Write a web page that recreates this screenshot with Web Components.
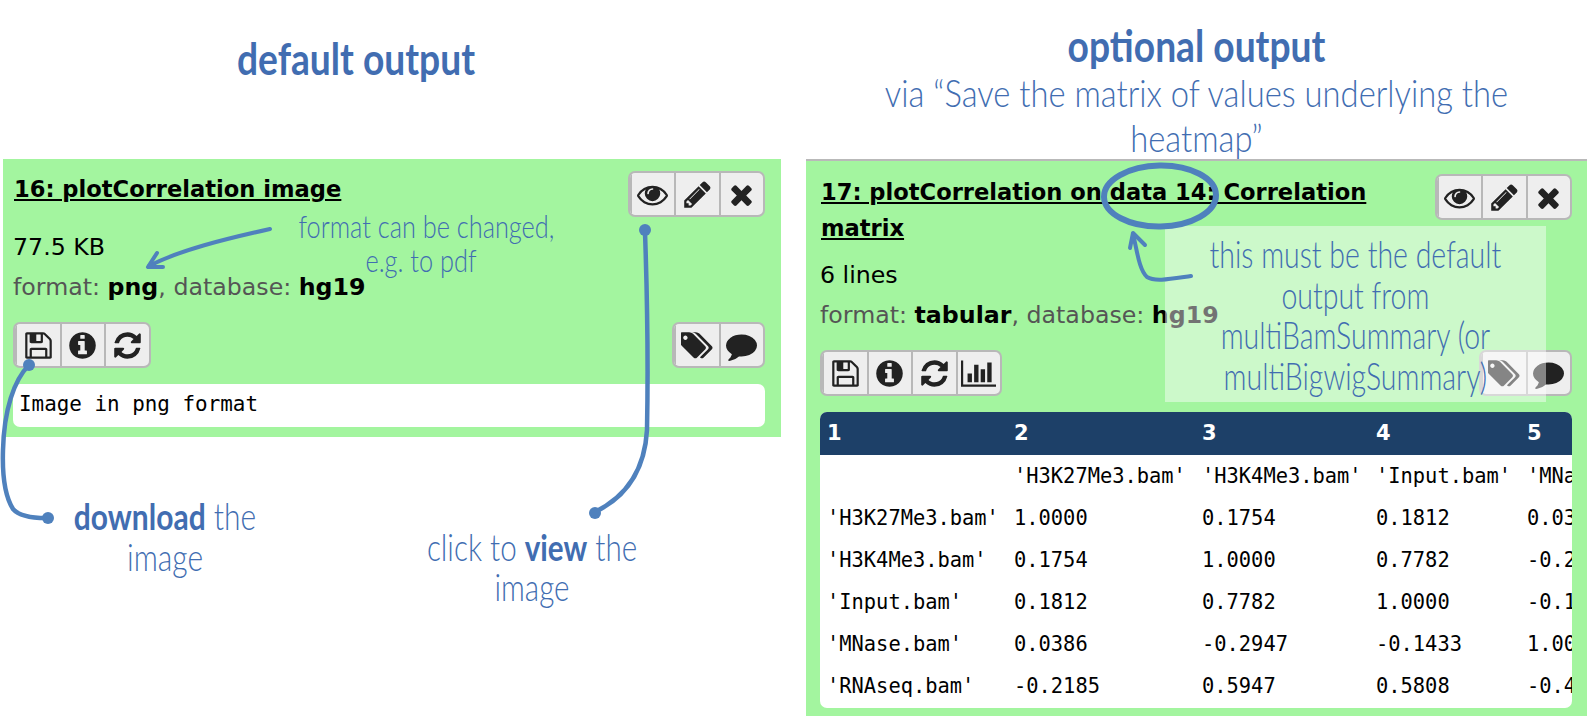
<!DOCTYPE html>
<html><head><meta charset="utf-8"><title>Galaxy plotCorrelation output</title>
<style>
html,body{margin:0;background:#fff;overflow:hidden}
x-dataset b{color:#000}
</style></head><body>
<x-page>
  <x-column slot="left" style="--head-pad:29px;--head-r:72px">
    <x-hand slot="head" bold style="--s:43px;--lh:60px;--x:.865">default output</x-hand>
    <x-dataset style="--top:0px;--pt:12px;--sm:10px;--pad-l:10px;--pad-r:16px">
      <span slot="title">16: plotCorrelation image</span>
      <x-icongroup slot="top" icons="eye pencil times"></x-icongroup>
      <span slot="size">77.5 KB</span>
      <span slot="meta">format: <b>png</b>, database: <b>hg19</b></span>
      <x-icongroup slot="left" icons="save info refresh"></x-icongroup>
      <x-icongroup slot="right" icons="tags comment"></x-icongroup>
      <x-peek>Image in png format</x-peek>
    </x-dataset>
  </x-column>
  <x-column slot="right" style="--head-pad:21px;--head-r:0px">
    <x-hand slot="head" bold style="--s:43px;--lh:49px;--x:.865">optional output</x-hand>
    <x-hand slot="head" style="--s:37px;--lh:45px;--x:.885">via “Save the matrix of values underlying the<br>heatmap”</x-hand>
    <x-dataset style="--top:2px;--pt:13px;--sm:9px;--pad-l:14px;--pad-r:15px">
      <span slot="title">17: plotCorrelation on data 14: Correlation matrix</span>
      <x-icongroup slot="top" icons="eye pencil times"></x-icongroup>
      <span slot="size">6 lines</span>
      <span slot="meta">format: <b>tabular</b>, database: <b>hg19</b></span>
      <x-icongroup slot="left" icons="save info refresh chart"></x-icongroup>
      <x-icongroup slot="right" icons="tags comment"></x-icongroup>
      <x-datatable></x-datatable>
    </x-dataset>
  </x-column>
</x-page>
<x-callout style="position:absolute;left:1165px;top:226px;width:381px;height:176px">this must be the default<br>output from<br>multiBamSummary (or<br>multiBigwigSummary)</x-callout>
<x-marks></x-marks>
<x-hand style="position:absolute;left:271px;top:209px;width:300px;--s:31px;--lh:34px;--x:.817">format can be changed,<br>e.g. to pdf</x-hand>
<x-hand style="position:absolute;left:15px;top:495px;width:300px;--s:37px;--lh:41px;--x:.81"><b>download</b> the<br>image</x-hand>
<x-hand style="position:absolute;left:382px;top:527px;width:300px;--s:37px;--lh:40px;--x:.80">click to <b>view</b> the<br>image</x-hand>

<template id="t-page"><style>
:host{display:grid;grid-template-columns:778px 781px;column-gap:25px;padding-left:3px;width:1584px;height:716px;overflow:hidden}
</style><slot name="left"></slot><slot name="right"></slot></template>

<template id="t-column"><style>
:host{display:flex;flex-direction:column;min-width:0}
.head{height:calc(159px - var(--head-pad));padding:var(--head-pad) var(--head-r) 0 0;overflow:visible}
</style><div class="head"><slot name="head"></slot></div><slot></slot></template>

<template id="t-hand"><style>
:host{display:block;text-align:center;white-space:nowrap;color:#416db1;font:300 var(--s)/var(--lh) "Lato",sans-serif;transform:scaleX(var(--x));position:relative;z-index:7}
:host([bold]){font-weight:700}
::slotted(b){font-weight:700}
</style><slot></slot></template>

<template id="t-dataset"><style>
:host{display:block;background:#a3f59f;border-top:var(--top) solid #b9b9b9;padding:var(--pt) var(--pad-r) 10px var(--pad-l);font:23.7px/40px "DejaVu Sans",sans-serif;color:#000}
.head{display:flex;justify-content:space-between;align-items:flex-start;min-height:46px}
.title{font-weight:700;font-size:22.6px;line-height:36px;text-decoration:underline;width:570px;padding-left:1px}
.size{margin-top:var(--sm)}
.meta{color:#555}
.actions{display:flex;justify-content:space-between;margin:15px 0 16px}
</style>
<div class="head"><div class="title"><slot name="title"></slot></div><slot name="top"></slot></div>
<div class="size"><slot name="size"></slot></div>
<div class="meta"><slot name="meta"></slot></div>
<div class="actions"><slot name="left"></slot><slot name="right"></slot></div>
<slot></slot></template>

<template id="t-peek"><style>
:host{display:block;background:#fff;border-radius:7px;height:43px;padding-left:6px;font:20.9px/41px "DejaVu Sans Mono",monospace;color:#000}
</style><slot></slot></template>

<template id="t-callout"><style>
:host{display:flex;align-items:center;justify-content:center;background:rgba(255,255,255,.45);z-index:4}
div{text-align:center;white-space:nowrap;color:#416db1;font:300 37px/40.5px "Lato",sans-serif;transform:scaleX(.77);padding-top:2px}
</style><div><slot></slot></div></template>

<template id="t-table"><style>
:host{display:block;background:#fff;border-radius:7px;overflow:hidden;height:296px}
table{border-collapse:collapse;table-layout:fixed;width:900px;font:20.4px/42px "DejaVu Sans Mono",monospace;color:#000}
th{background:#1d4068;color:#fff;text-align:left;font:700 21px/43px "DejaVu Sans",sans-serif;height:43px;padding:0 0 0 7px}
td{padding:0 0 0 7px;height:42px;white-space:nowrap;overflow:hidden}
</style><table><colgroup><col style="width:187px"><col style="width:188px"><col style="width:174px"><col style="width:151px"><col style="width:200px"></colgroup><thead></thead><tbody></tbody></table></template>

<script>
const ICONS={
eye:[1792,'M1664 960q-152-236-381-353 61 104 61 225 0 185-131.500 316.500t-316.500 131.500-316.500-131.500-131.500-316.500q0-121 61-225-229 117-381 353 133 205 333.500 326.500t434.500 121.500 434.500-121.500 333.500-326.500zm-720-384q0-20-14-34t-34-14q-125 0-214.500 89.500t-89.500 214.500q0 20 14 34t34 14 34-14 14-34q0-86 61-147t147-61q20 0 34-14t14-34zm848 384q0 34-20 69-140 230-376.500 368.500t-499.500 138.500-499.500-139-376.500-368q-20-35-20-69t20-69q140-229 376.500-368t499.500-139 499.500 139 376.500 368q20 35 20 69z'],
pencil:[1792,'M491 1536l91-91-235-235-91 91v107h128v128h107zm523-928q0-22-22-22-10 0-17 7l-542 542q-7 7-7 17 0 22 22 22 10 0 17-7l542-542q7-7 7-17zm-54-192l416 416-832 832h-416v-416zm683 96q0 53-37 90l-166 166-416-416 166-165q36-38 90-38 53 0 91 38l235 234q37 39 37 91z'],
times:[1792,'M1490 1322q0 40-28 68l-136 136q-28 28-68 28t-68-28l-294-294-294 294q-28 28-68 28t-68-28l-136-136q-28-28-28-68t28-68l294-294-294-294q-28-28-28-68t28-68l136-136q28-28 68-28t68 28l294 294 294-294q28-28 68-28t68 28l136 136q28 28 28 68t-28 68l-294 294 294 294q28 28 28 68z'],
save:[1792,'M512 1536h768v-384h-768v384zm896 0h128v-896q0-14-10-38.500t-20-34.500l-281-281q-10-10-34-20t-39-10v416q0 40-28 68t-68 28h-576q-40 0-68-28t-28-68v-416h-128v1280h128v-416q0-40 28-68t68-28h832q40 0 68 28t28 68v416zm-384-928v-320q0-13-9.500-22.500t-22.500-9.500h-192q-13 0-22.500 9.500t-9.500 22.500v320q0 13 9.500 22.500t22.500 9.500h192q13 0 22.500-9.500t9.500-22.500zm640 32v928q0 40-28 68t-68 28h-1344q-40 0-68-28t-28-68v-1344q0-40 28-68t68-28h928q40 0 88 20t76 48l280 280q28 28 48 76t20 88z'],
info:[1792,'M1152 1376v-160q0-14-9-23t-23-9h-96v-512q0-14-9-23t-23-9h-320q-14 0-23 9t-9 23v160q0 14 9 23t23 9h96v320h-96q-14 0-23 9t-9 23v160q0 14 9 23t23 9h448q14 0 23-9t9-23zm-128-896v-160q0-14-9-23t-23-9h-192q-14 0-23 9t-9 23v160q0 14 9 23t23 9h192q14 0 23-9t9-23zm640 416q0 209-103 385.500t-279.500 279.500-385.500 103-385.500-103-279.500-279.500-103-385.500 103-385.500 279.500-279.500 385.500-103 385.500 103 279.500 279.500 103 385.500z'],
refresh:[1792,'M1639 1056q0 5-1 7-64 268-268 434.500t-478 166.500q-146 0-282.500-55t-243.500-157l-129 129q-19 19-45 19t-45-19-19-45v-448q0-26 19-45t45-19h448q26 0 45 19t19 45-19 45l-137 137q71 66 161 102t187 36q134 0 250-65t186-179q11-17 53-117 8-23 30-23h192q13 0 22.500 9.500t9.500 22.500zm25-800v448q0 26-19 45t-45 19h-448q-26 0-45-19t-19-45 19-45l138-138q-148-137-349-137-134 0-250 65t-186 179q-11 17-53 117-8 23-30 23h-199q-13 0-22.500-9.500t-9.500-22.500v-7q65-268 270-434.500t480-166.500q146 0 284 55.500t245 156.500l130-129q19-19 45-19t45 19 19 45z'],
tags:[1920,'M384 448q0-53-37.500-90.500t-90.500-37.500-90.500 37.500-37.500 90.500 37.500 90.500 90.500 37.500 90.500-37.500 37.500-90.500zm1067 576q0 53-37 90l-491 492q-39 37-91 37-53 0-90-37l-715-716q-38-37-64.500-101t-26.500-117v-416q0-52 38-90t90-38h416q53 0 117 26.500t102 64.500l715 714q37 39 37 91zm384 0q0 53-37 90l-491 492q-39 37-91 37-36 0-59-14t-53-45l470-470q37-37 37-90 0-52-37-91l-715-714q-38-38-102-64.500t-117-26.500h224q53 0 117 26.500t102 64.500l715 714q37 39 37 91z'],
comment:[1792,'M1792 896q0 174-120 321.500t-326 233-450 85.500q-70 0-145-8-198 175-460 242-49 14-114 22-17 2-30.500-9t-17.500-29v-1q-3-4-.5-12t2-10 4.500-9.500l6-9 7-8.500 8-9q7-8 31-34.500t34.500-38 31-39.500 32.500-51 27-59 26-76q-157-89-247.500-220t-90.500-281q0-130 71-248.500t191-204.500 286-136.500 348-50.500q244 0 450 85.500t326 233 120 321.500z'],
chart:[2048,'M640 896v512h-256v-512h256zm384-512v1024h-256v-1024h256zm1024 1152v128h-2048v-1536h128v1408h1920zm-640-896v768h-256v-768h256zm384-384v1152h-256v-1152h256z']
};
function def(name,tpl){
  customElements.define(name,class extends HTMLElement{
    constructor(){super();this.attachShadow({mode:'open'}).append(document.getElementById(tpl).content.cloneNode(true));}
  });
}
def('x-page','t-page');def('x-column','t-column');def('x-hand','t-hand');def('x-dataset','t-dataset');def('x-peek','t-peek');def('x-callout','t-callout');
customElements.define('x-icongroup',class extends HTMLElement{
  constructor(){super();this.attachShadow({mode:'open'});}
  connectedCallback(){
    const names=this.getAttribute('icons').split(' ');
    this.shadowRoot.innerHTML=`<style>
:host{display:inline-flex;height:46px;box-sizing:border-box;border:2px solid #b8b8b8;border-radius:7px;background:#eee;overflow:hidden}
span{display:flex;align-items:center;justify-content:center;width:42.5px;height:42px;color:#222;border-left:2px solid #b8b8b8}
span:first-child{border-left:0}
svg{display:block;width:31px;height:31px;fill:currentColor}
svg.chart{width:35px}svg.tags{width:33px}
</style>`+names.map(n=>`<span><svg class="${n}" viewBox="0 0 ${ICONS[n][0]} 1792"><path d="${ICONS[n][1]}"/></svg></span>`).join('');
  }
});
customElements.define('x-datatable',class extends HTMLElement{
  constructor(){super();this.attachShadow({mode:'open'}).append(document.getElementById('t-table').content.cloneNode(true));}
  connectedCallback(){
    const rows=[["","'H3K27Me3.bam'","'H3K4Me3.bam'","'Input.bam'","'MNase.bam'"],
    ["'H3K27Me3.bam'","1.0000","0.1754","0.1812","0.0386"],
    ["'H3K4Me3.bam'","0.1754","1.0000","0.7782","-0.2947"],
    ["'Input.bam'","0.1812","0.7782","1.0000","-0.1433"],
    ["'MNase.bam'","0.0386","-0.2947","-0.1433","1.0000"],
    ["'RNAseq.bam'","-0.2185","0.5947","0.5808","-0.4"]];
    const s=this.shadowRoot;
    s.querySelector('thead').innerHTML='<tr>'+[1,2,3,4,5].map(n=>`<th>${n}</th>`).join('')+'</tr>';
    s.querySelector('tbody').innerHTML=rows.map(r=>'<tr>'+r.map(c=>`<td>${c}</td>`).join('')+'</tr>').join('');
  }
});
customElements.define('x-marks',class extends HTMLElement{
  constructor(){super();this.attachShadow({mode:'open'}).innerHTML=`<style>
:host{position:absolute;left:0;top:0;width:1587px;height:716px;pointer-events:none;z-index:6}
svg{display:block;overflow:visible}
path,ellipse{fill:none;stroke:#4f81bd;stroke-linecap:round;stroke-linejoin:round}
circle{fill:#4f81bd}
</style><svg width="1587" height="716" viewBox="0 0 1587 716">
<path stroke-width="4" d="M270 229C225 239 180 250 149 266"/>
<path stroke-width="4" d="M157 253L148 267L163 267"/>
<circle cx="29" cy="365" r="6"/>
<path stroke-width="4.500" d="M29 365C14 380 4 410 3 450C2 480 6 498 13 509C19 516 33 518 46 518"/>
<circle cx="48" cy="518" r="6"/>
<circle cx="645" cy="230" r="6"/>
<path stroke-width="4.500" d="M645 232C647 290 648 380 647 430C645 465 630 495 595 512"/>
<circle cx="595" cy="513" r="6"/>
<ellipse stroke-width="6" cx="1160" cy="196" rx="56" ry="30.500" transform="rotate(-1 1160 196)"/>
<path stroke-width="4" d="M1191 276C1170 279 1155 282 1147 277C1139 270 1137 250 1133 234"/>
<path stroke-width="4" d="M1130 248L1133 233L1145 245"/>
</svg>`;}
});
</script>
</body></html>
